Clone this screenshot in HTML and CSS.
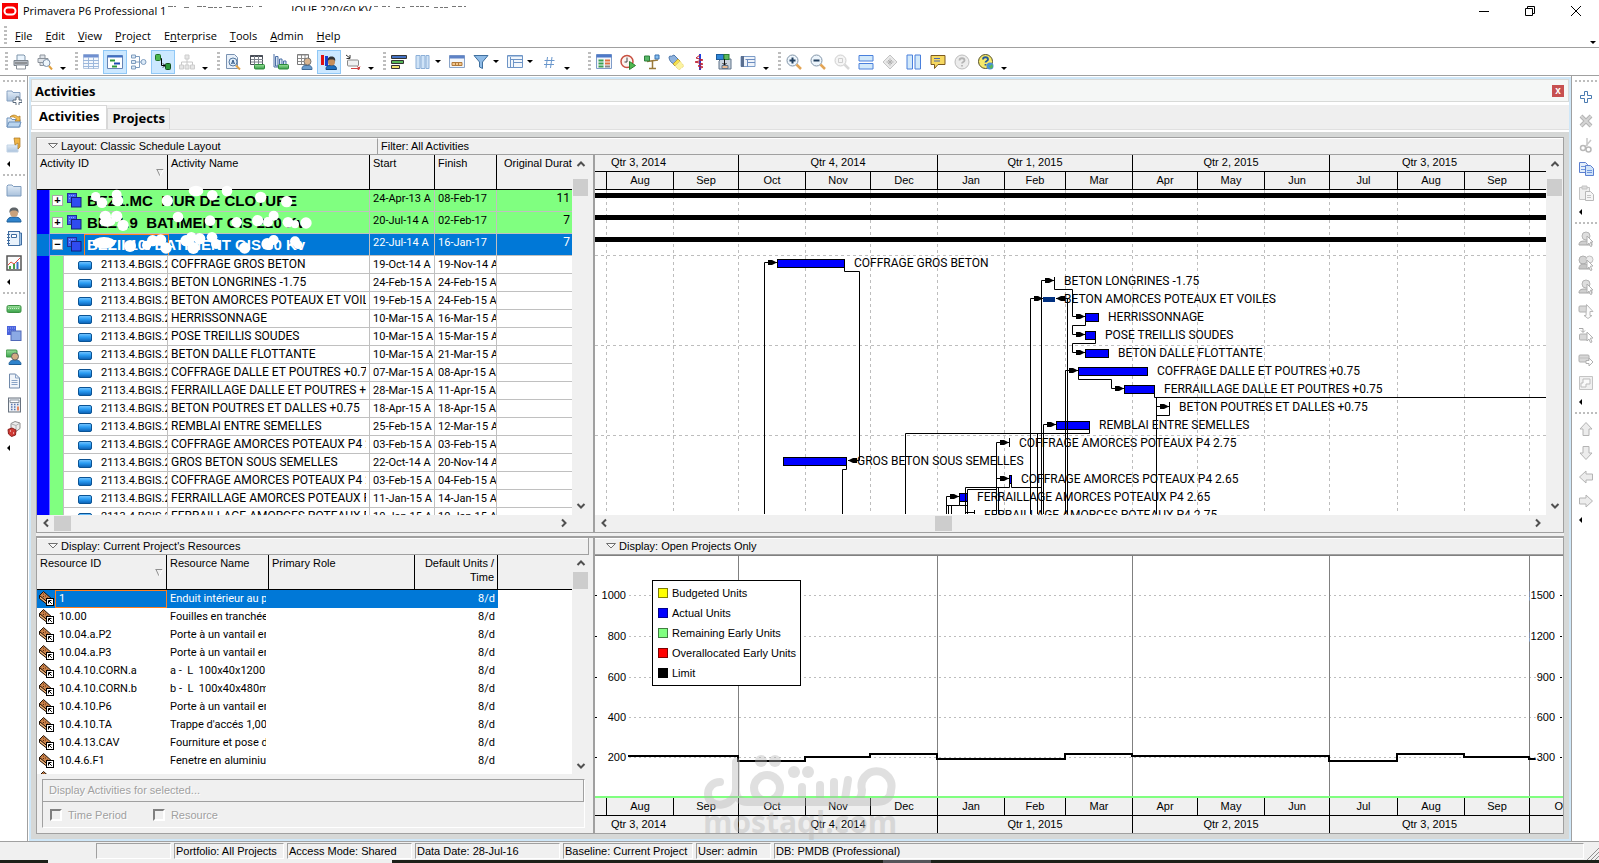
FILE: index.html
```html
<!DOCTYPE html>
<html lang="en">
<head>
<meta charset="utf-8">
<title>Primavera P6 Professional</title>
<link rel="stylesheet" href="styles.css">
</head>
<body>
<svg class="defs" aria-hidden="true">
  <defs>
    <linearGradient id="g-blue" x1="0" y1="0" x2="0" y2="1"><stop offset="0" stop-color="#7cc8ff"/><stop offset=".45" stop-color="#2a9df4"/><stop offset="1" stop-color="#0a5fb4"/></linearGradient>
    <linearGradient id="g-folder" x1="0" y1="0" x2="0" y2="1"><stop offset="0" stop-color="#e3edf7"/><stop offset="1" stop-color="#a9c1dc"/></linearGradient>
    <linearGradient id="g-green" x1="0" y1="0" x2="0" y2="1"><stop offset="0" stop-color="#9be09b"/><stop offset="1" stop-color="#38a048"/></linearGradient>
    <symbol id="i-act" viewBox="0 0 14 9"><rect x=".5" y=".5" width="13" height="8" rx="1.5" fill="url(#g-blue)" stroke="#0b5394"/></symbol>
    <symbol id="i-wbs" viewBox="0 0 15 15"><rect x=".5" y=".5" width="9" height="9" fill="#3f5ff0" stroke="#20309a"/><path d="M2 2.500h6M2 5.500h3" stroke="#8fa5ff" stroke-dasharray="1 1"/><rect x="4.500" y="4.500" width="9.500" height="9.500" fill="#2f4bf0" stroke="#15207a"/></symbol>
    <symbol id="i-res" viewBox="0 0 15 15"><path d="M.5 4.500 4.500.5 14 9l-4 5.500z" fill="#c8814a" stroke="#1c0f05"/><path d="M.5 4.500v3l9 7V12z" fill="#f3b377" stroke="#1c0f05"/><path d="M4 3h1M6 5h1M4 5.500h1M8 7h1M7 8.500h1" stroke="#5a2a0c"/><rect x="7.500" y="7.500" width="7" height="7" fill="#fff" stroke="#000"/><path d="M9.500 12.500V9.500h3M10 10l2.800 2.800" fill="none" stroke="#000"/></symbol>
    <symbol id="i-up" viewBox="0 0 10 8"><path d="m1.500 6 3.500-3.500L8.500 6" fill="none" stroke="#505050" stroke-width="2"/></symbol>
    <symbol id="i-down" viewBox="0 0 10 8"><path d="M1.500 2 5 5.500 8.500 2" fill="none" stroke="#505050" stroke-width="2"/></symbol>
    <symbol id="i-left" viewBox="0 0 8 10"><path d="M6 1.500 2.500 5 6 8.500" fill="none" stroke="#505050" stroke-width="2"/></symbol>
    <symbol id="i-right" viewBox="0 0 8 10"><path d="M2 1.500 5.500 5 2 8.500" fill="none" stroke="#505050" stroke-width="2"/></symbol>
    <symbol id="i-tri" viewBox="0 0 10 6"><path d="M.5.5h9L5 5z" fill="#f8f8f8" stroke="#707070"/></symbol>
    <symbol id="i-person" viewBox="0 0 16 16"><path d="M1 15c0-4 3-5 7-5s7 1 7 5z" fill="#2f83cc" stroke="#1b5c97"/><circle cx="8" cy="6" r="4" fill="#c9a27c"/><path d="M3.500 6C3 2 5 .5 8 .5S13 2 12.500 6c-1-2-2-2.500-4.500-2.500S4.500 4 3.500 6z" fill="#5e6468"/></symbol>
    <symbol id="i-personx" viewBox="0 0 16 16"><circle cx="8" cy="5" r="4" fill="#dedede" stroke="#b4b4b4"/><path d="M1 14c0-4 3-4 7-4s6 0 6 4z" fill="#cfcfcf" stroke="#a8a8a8"/><path d="m9 5 6 6-2.600.2L14 15l-1.500.6-1.500-3.500L9 14z" fill="#fff" stroke="#b0b0b0"/></symbol>
    <symbol id="i-boxx" viewBox="0 0 16 16"><rect x="1" y="4" width="10" height="7" rx="1" fill="#d8d8d8" stroke="#b0b0b0"/><path d="M1.500 7h9" stroke="#c0c0c0"/><path d="M8 9.500h3V7l4 4-4 4v-2.500H8z" fill="#fff" stroke="#b0b0b0"/></symbol>
    <symbol id="i-arrow" viewBox="0 0 16 16"><path d="M8 1.500 14 8h-3v6.500H5V8H2z" fill="#ececec" stroke="#b4b4b4"/></symbol>
  </defs>
</svg>

<header class="titlebar">
  <svg class="logo" viewBox="0 0 16 16"><rect width="16" height="16" fill="#f80000"/><rect x="2.500" y="4.500" width="11" height="7" rx="3.500" fill="none" stroke="#fff" stroke-width="2"/></svg>
  <span class="app-name">Primavera P6 Professional 1</span>
  <svg class="scraps" viewBox="0 0 120 8"><path d="M2 1.500h8M18 2.500h5M31 1.500h9M42 2.500h14M60 1.500h5M67 2.500h9M80 1.500h7M93 1.500h3" stroke="#777" stroke-dasharray="5 1 3 2"/></svg>
  <span class="clipped">IQUE 220/60 KV</span>
  <svg class="scraps" viewBox="0 0 120 8"><path d="M2 1.500h6M10 1.500h8M24 2.500h9M38 1.500h20M62 2.500h14M80 1.500h4M86 1.500h8" stroke="#777" stroke-dasharray="4 2 3 1"/></svg>
  <span class="spacer"></span>
  <button class="winbtn" aria-label="Minimize"><svg viewBox="0 0 10 10"><path d="M0 5.500h10" stroke="#000"/></svg></button>
  <button class="winbtn" aria-label="Restore"><svg viewBox="0 0 10 10"><path d="M.5 2.500h7v7h-7zM2.500 2.500v-2h7v7h-2" fill="none" stroke="#000"/></svg></button>
  <button class="winbtn" aria-label="Close"><svg viewBox="0 0 10 10"><path d="m0 0 10 10M10 0 0 10" stroke="#000"/></svg></button>
</header>

<nav class="menubar">
  <i class="grip tall"></i>
  <a href="#"><u>F</u>ile</a><a href="#"><u>E</u>dit</a><a href="#"><u>V</u>iew</a><a href="#"><u>P</u>roject</a><a href="#">E<u>n</u>terprise</a><a href="#"><u>T</u>ools</a><a href="#"><u>A</u>dmin</a><a href="#"><u>H</u>elp</a>
  <span class="spacer"></span>
  <button class="more" aria-label="Menu options"></button>
</nav>

<div class="toolbar">
  <div class="group"><i class="grip tall"></i>
    <button class="tool" aria-label="Print"><svg viewBox="0 0 16 16"><path d="M4 6V1h7l1 1v4" fill="#eaf4fd" stroke="#7f95ab"/><path d="M1 6.500h14v5H1z" fill="#b8bec6" stroke="#7d848c"/><path d="M2 9h12" stroke="#666"/><path d="M3.500 11h9v4h-9z" fill="#fff" stroke="#8a9199"/></svg></button>
    <button class="tool" aria-label="Print Preview"><svg viewBox="0 0 16 16"><path d="M3 4V1h5v3M1 4.500h10v4H1zM3 8.500h5v3H3z" fill="#dfe3e8" stroke="#8c939b"/><circle cx="9.500" cy="9" r="3.500" fill="#eef6fc" stroke="#7c8fa5"/><path d="m12 12 3 3.500" stroke="#e0a040" stroke-width="2"/></svg></button>
    <button class="more" aria-label="More"></button></div>
  <div class="group"><i class="grip tall"></i>
    <button class="tool" aria-label="Activity Table"><svg viewBox="0 0 16 16"><path d="M.5.5h15v14H.5z" fill="#f4f8fd" stroke="#b7c8e0"/><path d="M.5.5h15v3H.5z" fill="#6f8fd0"/><path d="M0 6.500h16M0 9.500h16M0 12.500h16M5.500 3v12M10.500 3v12" stroke="#9db8dc"/></svg></button>
    <button class="tool on" aria-label="Gantt Chart"><svg viewBox="0 0 16 16"><path d="M.5 1.500h15v13H.5z" fill="#fff" stroke="#6684b5"/><path d="M.5 1.500h15v2H.5z" fill="#3d6fc4"/><path d="M3 6.500h5" stroke="#2a9a3a" stroke-width="2"/><path d="M7 9.500h6" stroke="#1d49b0" stroke-width="2"/><path d="M5 12.500h5" stroke="#2a9a3a" stroke-width="2"/></svg></button>
    <button class="tool" aria-label="Activity Network"><svg viewBox="0 0 16 16"><path d="M4 2.500h4.500v11H4M4 8h6" fill="none" stroke="#7f9cbe"/><path d="M.5 1h4v3h-4zM.5 6.500h4v3h-4zM.5 12h4v3h-4z" fill="#dceaf7" stroke="#7f9cbe"/><circle cx="12.500" cy="8" r="2.500" fill="#dceaf7" stroke="#7f9cbe"/></svg></button>
    <button class="tool on" aria-label="Trace Logic"><svg viewBox="0 0 16 16"><path d="M5 4.500h1.500v7H10M8 9.500l2 2-2 2" fill="none" stroke="#000"/><rect x=".5" y=".5" width="5" height="6" rx="1" fill="#4cb84c" stroke="#20702a"/><rect x="10.500" y="9.500" width="5" height="6" rx="1" fill="#2c9a3c" stroke="#155020"/></svg></button>
    <button class="tool" aria-label="Chart View"><svg viewBox="0 0 16 16"><path d="M8 4v7M2.500 11V8h11v3" fill="none" stroke="#c8c8c8"/><path d="M6 1h4v4H6zM.5 11h4v4h-4zM6 11h4v4H6zM11.500 11h4v4h-4z" fill="#e6e6e6" stroke="#cdcdcd"/></svg></button>
    <button class="more" aria-label="More"></button></div>
  <div class="group"><i class="grip tall"></i>
    <button class="tool" aria-label="Activity Details"><svg viewBox="0 0 16 16"><path d="M1.500.5h8l3 3v11h-11z" fill="#e8f0f9" stroke="#7a92b2"/><circle cx="8" cy="8" r="4" fill="#dfeefb" stroke="#56789f"/><path d="m6.500 10 1.500-4 1.500 4M7 9h2" fill="none" stroke="#345a8a"/><path d="m11 11.500 4 4" stroke="#e3a243" stroke-width="2"/></svg></button>
    <button class="tool" aria-label="Resource Usage"><svg viewBox="0 0 16 16"><path d="M1.500 1.500h12v9h-12z" fill="#fff" stroke="#4a4f58"/><path d="M1.500 2h12" stroke="#4a4f58" stroke-width="2"/><path d="M2 5.500h12M2 8h12M5.500 2v9M9.500 2v9" stroke="#7c828c"/><rect x="5.500" y="10.500" width="10" height="4.500" rx="1" fill="url(#g-green)" stroke="#2b8a3a"/></svg></button>
    <button class="tool" aria-label="Resource Profile"><svg viewBox="0 0 16 16"><path d="M1 0v13h14" fill="none" stroke="#4a6ea5"/><path d="M2.500 2.500h2.500V12H2.500zM6.500 5h2.500v7H6.500zM10.500 7h2.500v5h-2.500z" fill="#d7e6f6" stroke="#4a6ea5"/><rect x="5.500" y="10.500" width="10" height="4.500" rx="1" fill="url(#g-green)" stroke="#2b8a3a"/></svg></button>
    <button class="tool" aria-label="Resource Spreadsheet"><svg viewBox="0 0 16 16"><path d="M.5.500h11v10H.5z" fill="#fff" stroke="#777"/><path d="M.5 1h11M1 4.500h10M1 7.500h10M4.500 1v9M8 1v9" stroke="#8b8b8b"/><path d="M5 15.500c0-4 2-4 5-4s5 0 5 4z" fill="#6b9ccc" stroke="#3c6998"/><circle cx="10.500" cy="7.500" r="3.500" fill="#d8b48f" stroke="#777"/></svg></button>
    <button class="tool on" aria-label="Resource Profile Chart"><svg viewBox="0 0 16 16"><path d="M1.500 1v10" stroke="#e01010" stroke-width="3"/><path d="M5.500 2v10" stroke="#1740d0" stroke-width="3"/><path d="M5 15.500c0-4 2-4 5-4s5.500 0 5.500 4z" fill="#1d6fc0" stroke="#0f4680"/><circle cx="10.500" cy="8" r="3.500" fill="#c58d5a"/><path d="M7 8c-1-4 1-5.500 3.500-5.500S15 4 14 8c0-2-1-2.500-3.500-2.500S7 6 7 8z" fill="#333"/></svg></button>
    <button class="tool" aria-label="Assign"><svg viewBox="0 0 16 16"><path d="m1 1 4 3M5 1v3.500H1.500" fill="none" stroke="#333"/><rect x="2.500" y="6" width="11" height="6" rx="1" fill="#f0f0f0" stroke="#888"/><path d="M6 14.500h8l1-2M12 12.500l3 2-3 2" fill="none" stroke="#d04040"/></svg></button>
    <button class="more" aria-label="More"></button></div>
  <div class="group"><i class="grip tall"></i>
    <button class="tool" aria-label="Bars"><svg viewBox="0 0 16 16"><path d="M.5 1.500h15v3H.5z" fill="#4472c4" stroke="#333"/><path d="M.5 6.500h12v3H.5z" fill="#58b858" stroke="#333"/><path d="M.5 11.500h8v3h-8z" fill="#f0e070" stroke="#333"/></svg></button>
    <button class="tool" aria-label="Columns"><svg viewBox="0 0 16 16"><path d="M1 1.500h4v13H1zM6 1.500h4v13H6zM11 1.500h3v13h-3z" fill="#cfe3f7" stroke="#8db0d8"/></svg></button><button class="drop" aria-label="Columns options"></button>
    <button class="tool" aria-label="Timescale"><svg viewBox="0 0 16 16"><path d="M.5 1.500h15v12H.5z" fill="#f2f6fb" stroke="#8aa4c8"/><path d="M.5 1.500h15v3H.5z" fill="#5e82c6"/><path d="M3 8.500h10v3H3z" fill="#f4c68a" stroke="#b07a3c"/><path d="M6.500 8v4M9.500 8v4" stroke="#b07a3c"/></svg></button>
    <button class="tool" aria-label="Filter"><svg viewBox="0 0 16 16"><path d="M1 1.500h14L9.500 8v6.500l-3-1.500V8z" fill="#8fbbe6" stroke="#40709f"/></svg></button><button class="drop" aria-label="Filter options"></button>
    <button class="tool" aria-label="Group and Sort"><svg viewBox="0 0 16 16"><path d="M.5 1.500h15v12H.5z" fill="#f2f7fc" stroke="#6d94c6"/><path d="M1 2h14M3.500 3v10M3 5.500h12M6.500 6v8M6 8.500h9" stroke="#6d94c6"/></svg></button><button class="drop" aria-label="Group options"></button>
    <button class="tool" aria-label="Number"><svg viewBox="0 0 16 16"><path d="M6.500 3 5 14M11 3 9.500 14M3.500 6.500h10M3 10.500h10" stroke="#6a97cc"/></svg></button>
    <button class="more" aria-label="More"></button></div>
  <div class="group wide"><i class="grip tall"></i>
    <button class="tool" aria-label="Activity Codes"><svg viewBox="0 0 16 16"><path d="M.5.5h15v14H.5z" fill="#f2f5fb" stroke="#7f9cc8"/><path d="M.5.5h15v3H.5z" fill="#4d78c8"/><path d="M2.500 6.500h5M2.500 9.500h5M2.500 12.500h5" stroke="#3aa050" stroke-width="2"/><path d="M9 6.500h5M9 9.500h5" stroke="#e07040" stroke-width="2"/><path d="M9 12.500h5" stroke="#888" stroke-width="2"/></svg></button>
    <button class="tool" aria-label="Schedule"><svg viewBox="0 0 16 16"><circle cx="7" cy="7.500" r="6" fill="#fbf3f0" stroke="#c85040" stroke-width="1.500"/><path d="M7 3.500v4.500H4.500" fill="none" stroke="#444"/><path d="m9.500 7.500 6 4-6 4z" fill="#4fb850" stroke="#2b8030"/></svg></button>
    <button class="tool" aria-label="Level Resources"><svg viewBox="0 0 16 16"><path d="M3 7.500 14 6M8.500 7v7M5 14.500h7" fill="none" stroke="#9a7a3a" stroke-width="1.500"/><path d="M.5 2h5v5h-5z" fill="#58b868" stroke="#2f7f3c"/><path d="M11 1h4v4h-4z" fill="#84bdf0" stroke="#3a72b0"/></svg></button>
    <button class="tool" aria-label="Progress Spotlight"><svg viewBox="0 0 16 16"><path d="M1 3c1-2 2 0 3-1l2-1 4 4-4 5C3 9 1 6 1 3z" fill="#8fb3de" stroke="#4f78ac"/><path d="m10 5 2 2-5 5-2-2z" fill="#f5e04a" stroke="#b8a040"/><path d="m12 7 4 5-5 4-4-4z" fill="#fbf3a0" stroke="#e6d070" stroke-dasharray="1 1"/></svg></button>
    <button class="tool" aria-label="Progress Line"><svg viewBox="0 0 16 16"><path d="M8 0v16" stroke="#2040e0" stroke-width="2"/><path d="m8 1-4 3 7 2-8 2 8 2-5 2 5 1-4 2" fill="none" stroke="#c02030"/></svg></button>
    <button class="tool" aria-label="Store Period Performance"><svg viewBox="0 0 16 16"><path d="M5 5h10v10H3V7z" fill="#c9d3de" stroke="#5f7389"/><rect x=".5" y=".5" width="7" height="5" fill="#2f86d8" stroke="#1b5a9a"/><rect x="8" y=".5" width="5" height="5" fill="#5cba5c" stroke="#2d7f33"/><path d="M8.500 5v6M6.500 9l2 2 2-2" fill="none" stroke="#111"/><path d="M6 11.500h6v3H6z" fill="#e8b890" stroke="#5f7389"/></svg></button>
    <button class="tool" aria-label="Claim Digger"><svg viewBox="0 0 16 16"><path d="M1 2.500h14v10H1z" fill="#eef3fa" stroke="#7c9cc8"/><path d="M2.500 2v11" stroke="#5a6f90" stroke-width="3"/><path d="M5.500 5.500H15M7.500 6v7M7.500 8.500H15" fill="none" stroke="#6d8dc0"/></svg></button>
    <button class="more" aria-label="More"></button></div>
  <div class="group"><i class="grip tall"></i>
    <button class="tool" aria-label="Zoom In"><svg viewBox="0 0 16 16"><circle cx="6.500" cy="6.500" r="5.500" fill="#edf5fc" stroke="#8295a8"/><path d="M6.500 3.500v6M3.500 6.500h6" stroke="#23405f" stroke-width="2"/><path d="m10.500 10.500 4.500 4.500" stroke="#e3a556" stroke-width="2.500"/></svg></button>
    <button class="tool" aria-label="Zoom Out"><svg viewBox="0 0 16 16"><circle cx="6.500" cy="6.500" r="5.500" fill="#edf5fc" stroke="#8295a8"/><path d="M3.500 6.500h6" stroke="#23405f" stroke-width="2"/><path d="m10.500 10.500 4.500 4.500" stroke="#e3a556" stroke-width="2.500"/></svg></button>
    <button class="tool" aria-label="Zoom to Fit"><svg viewBox="0 0 16 16"><circle cx="6.500" cy="6.500" r="5.500" fill="#f5f5f5" stroke="#cfcfcf"/><path d="M4.500 4.500h4v4h-4z" fill="none" stroke="#cfcfcf"/><path d="m10.500 10.500 4.500 4.500" stroke="#d8d8d8" stroke-width="2.500"/></svg></button>
    <button class="tool" aria-label="Tile Horizontally"><svg viewBox="0 0 16 16"><path d="M1 1.500h14v5.500H1zM1 9.500h14V15H1z" fill="#d2e9fa" stroke="#4a80dc"/></svg></button>
    <button class="tool" aria-label="Milestone"><svg viewBox="0 0 16 16"><path d="m8 1 7 7-7 7-7-7z" fill="#e8e8e8" stroke="#c4c4c4"/><path d="M8 4.500v7M4.500 8h7M6 6l4 4M10 6l-4 4" stroke="#b0b0b0"/></svg></button>
    <button class="tool" aria-label="Tile Vertically"><svg viewBox="0 0 16 16"><path d="M1 1h5.500v14H1zM9 1h5.500v14H9z" fill="#d2e9fa" stroke="#4a80dc"/></svg></button>
    <button class="tool" aria-label="Comment"><svg viewBox="0 0 16 16"><path d="M1 1.500h14v9H8L4.500 14.500V10.500H1z" fill="#f6d860" stroke="#7c5a20"/><path d="M4 4.500h6M4 7h6" stroke="#4a6ab0"/></svg></button>
    <button class="tool" aria-label="Help Topic"><svg viewBox="0 0 16 16"><circle cx="8" cy="8" r="7" fill="#ececec" stroke="#bdbdbd"/><path d="M5.500 6.500c0-3 5-3 5 0 0 1.500-2.500 1.500-2.500 3M8 11v1.500" fill="none" stroke="#b4b4b4" stroke-width="1.800"/></svg></button>
    <button class="tool" aria-label="Online Help"><svg viewBox="0 0 16 16"><circle cx="7.500" cy="7.500" r="7" fill="#f6e96a" stroke="#54502a"/><path d="M5 5.500c0-3 5-3 5 0 0 1.500-2.500 1.500-2.500 3M7.500 10v1.500" fill="none" stroke="#22579c" stroke-width="1.800"/><circle cx="12" cy="12" r="3.500" fill="#4a90d8"/><path d="m10 11 2 1 2-2 1 3-2 2z" fill="#57b857"/></svg></button>
    <button class="more" aria-label="More"></button></div>
</div>

<div class="workspace">
  <aside class="rail left">
    <i class="grip flat"></i>
    <button class="tool" aria-label="New Project"><svg viewBox="0 0 16 16"><path d="M1 3.500V2h5l1 1.500h7V12H1z" fill="url(#g-folder)" stroke="#86a0c0"/><path d="M10 8h3v3h3v2.500h-3v3h-3v-3H7V11h3z" fill="#fff" stroke="#5a6a7c"/></svg></button>
    <button class="tool" aria-label="Open Project"><svg viewBox="0 0 16 16"><path d="M1 14V5h4l1 1.500h8V14z" fill="url(#g-folder)" stroke="#6f93bd"/><path d="M1 14 3 9h12l-2 5z" fill="#b9d4ee" stroke="#6f93bd"/><path d="M4 4c3-3 6-2 8 0l2-1v5H9l1.500-2C9 4 7 3.500 4 4z" fill="#f5bf4f" stroke="#a87420" stroke-width=".7"/></svg></button>
    <button class="tool" aria-label="Close Project"><svg viewBox="0 0 16 16"><path d="M1 15V8h11v7z" fill="url(#g-folder)" stroke="#c3d4e6"/><path d="M8 1h6v9l-2 2V6L9 8z" fill="#f0b546" stroke="#a87420" stroke-width=".7"/></svg></button>
    <button class="more" aria-label="More"></button>
    <i class="grip flat"></i>
    <button class="tool" aria-label="Projects"><svg viewBox="0 0 16 16"><path d="M1 3.500V3l1-1h4l1.500 1.500H15V13H1z" fill="url(#g-folder)" stroke="#7f9cbe"/></svg></button>
    <button class="tool" aria-label="Resources"><svg><use href="#i-person"/></svg></button>
    <button class="tool" aria-label="Reports"><svg viewBox="0 0 16 16"><rect x="2.500" y=".5" width="11" height="14" fill="#e9f2fb" stroke="#3f6ca0"/><path d="M13.500 2h2v12h-2" fill="#9cc0e4" stroke="#3f6ca0"/><path d="M5.500 3.500h5v3h-5z" fill="#fff" stroke="#3f6ca0"/><path d="M1 3.500h3M1 6.500h3M1 9.500h3M1 12.500h3" stroke="#3f6ca0"/></svg></button>
    <button class="tool" aria-label="Tracking"><svg viewBox="0 0 16 16"><rect x="1" y="1" width="14" height="14" fill="#fafafa" stroke="#555" stroke-width="1.500"/><path d="m2 10 3-3 3 2 6-6" fill="none" stroke="#e05040"/><path d="M4 14v-3M8 14V9" stroke="#48a048" stroke-width="2"/><path d="M11.500 14V7" stroke="#3c70c8" stroke-width="2"/></svg></button>
    <button class="more" aria-label="More"></button>
    <i class="grip flat"></i>
    <button class="tool" aria-label="Activities"><svg viewBox="0 0 16 16"><rect x="1" y="4.500" width="14" height="7" rx="1.500" fill="url(#g-green)" stroke="#3c9044"/><path d="M2 7.500h12" stroke="#c8f0c8" stroke-dasharray="1 1"/></svg></button>
    <button class="tool" aria-label="WBS"><svg viewBox="0 0 16 16"><rect x="1" y="1" width="9" height="9" fill="#4a63dc"/><path d="M2 3h7M2 6h7" stroke="#90a4f8" stroke-dasharray="1 1"/><rect x="5" y="6" width="10" height="9.500" fill="#8ba9e4" stroke="#5068b8"/></svg></button>
    <button class="tool" aria-label="Assignments"><svg viewBox="0 0 16 16"><rect x="0" y="1" width="11" height="7" rx="1" fill="url(#g-green)" stroke="#3c9044"/><path d="M3 15.500c0-3 2-4.500 6-4.500s6 1.500 6 4.500z" fill="#2f83cc" stroke="#1b5c97"/><circle cx="9" cy="7.500" r="3.500" fill="#d4ab83" stroke="#666"/></svg></button>
    <button class="tool" aria-label="Work Products"><svg viewBox="0 0 16 16"><path d="M3.500 1h6l4 4v10h-10z" fill="#f1f5fa" stroke="#7089aa"/><path d="M9.500 1v4h4M5.500 7.500h6M5.500 9.500h6M5.500 11.500h6" fill="none" stroke="#8aa4c6"/></svg></button>
    <button class="tool" aria-label="Expenses"><svg viewBox="0 0 16 16"><rect x="2.500" y="1" width="12" height="14" fill="#eceff3" stroke="#68727f"/><path d="M4 3h9v2.500H4z" fill="#fff" stroke="#8b95a1"/><path d="M5 7.500h1.500M8 7.500h1.500M11 7.500h1.500M5 10h1.500M8 10h1.500M5 12.500h1.500M8 12.500h1.500" stroke="#5674b0" stroke-width="1.500"/><path d="M12 9.500v4" stroke="#e06030" stroke-width="1.500"/></svg></button>
    <button class="tool" aria-label="Risks"><svg viewBox="0 0 16 16"><path d="m5 2.500 4-2 5 1.500v5.500l-4 3-5-2z" fill="#ededed" stroke="#8c8c8c"/><path d="M5.500 3 10 4.500l4-2.500M10 4.500v5" fill="none" stroke="#b0b0b0"/><path d="m2 8.500 4-1.500 4 2-.5 5-4 1.500-3-2.500z" fill="#cf3a34" stroke="#8c1f1c"/><path d="M4 10h1M7 12h1" stroke="#fff"/></svg></button>
    <button class="more" aria-label="More"></button>
  </aside>

  <main class="window">
    <div class="window-head"><h1>Activities</h1><button class="close" aria-label="Close">x</button></div>
    <div class="tabs"><button class="tab active">Activities</button><button class="tab">Projects</button></div>
    <div class="desk">
      <section class="upper">
        <div class="optbar">
          <div class="opt first"><svg class="tri"><use href="#i-tri"/></svg>Layout: Classic Schedule Layout</div>
          <div class="opt">Filter: All Activities</div>
        </div>
        <div class="split">
          <div class="pane-left">
            <div class="scroller">
              <div class="grid">
                <table class="acts">
                  <colgroup><col class="w13"><col class="w14"><col class="w-id"><col class="w-name"><col class="w-start"><col class="w-finish"><col></colgroup>
                  <thead><tr><th colspan="3">Activity ID<svg class="sort" viewBox="0 0 8 8"><path d="M.5.500h7M1 .5 4 7" fill="none" stroke="#909090"/><path d="M7.500.5 4 7" stroke="#fff"/></svg></th><th>Activity Name</th><th>Start</th><th>Finish</th><th class="od">Original Duration</th></tr></thead>
                  <tbody>
                    <tr class="grp"><td class="c0"></td><td colspan="3" class="gname"><div><b class="pm">+</b><svg class="wbs"><use href="#i-wbs"/></svg><strong>BEZ1.MC  MUR DE CLOTURE</strong></div></td><td class="dt"><span>24-Apr-13 A</span></td><td class="dt"><span>08-Feb-17</span></td><td class="num">11</td></tr>
                    <tr class="grp"><td class="c0"></td><td colspan="3" class="gname"><div><b class="pm">+</b><svg class="wbs"><use href="#i-wbs"/></svg><strong>BEZ1.9  BATIMENT GIS 220 Kv</strong></div></td><td class="dt"><span>20-Jul-14 A</span></td><td class="dt"><span>02-Feb-17</span></td><td class="num">7</td></tr>
                    <tr class="grp sel"><td class="c0"></td><td colspan="3" class="gname"><div><b class="pm">−</b><svg class="wbs"><use href="#i-wbs"/></svg><strong class="focus">BEZII.10. BATIMENT GIS 60 Kv</strong></div></td><td class="dt"><span>22-Jul-14 A</span></td><td class="dt"><span>16-Jan-17</span></td><td class="num">7</td></tr>
                    <tr><td class="c0"></td><td class="c1"></td><td class="id"><svg><use href="#i-act"/></svg><span>2113.4.BGIS.20</span></td><td><span>COFFRAGE GROS BETON</span></td><td class="dt"><span>19-Oct-14 A</span></td><td class="dt"><span>19-Nov-14 A</span></td><td></td></tr>
                    <tr><td class="c0"></td><td class="c1"></td><td class="id"><svg><use href="#i-act"/></svg><span>2113.4.BGIS.20</span></td><td><span>BETON LONGRINES -1.75</span></td><td class="dt"><span>24-Feb-15 A</span></td><td class="dt"><span>24-Feb-15 A</span></td><td></td></tr>
                    <tr><td class="c0"></td><td class="c1"></td><td class="id"><svg><use href="#i-act"/></svg><span>2113.4.BGIS.20</span></td><td><span>BETON AMORCES POTEAUX ET VOILES</span></td><td class="dt"><span>19-Feb-15 A</span></td><td class="dt"><span>24-Feb-15 A</span></td><td></td></tr>
                    <tr><td class="c0"></td><td class="c1"></td><td class="id"><svg><use href="#i-act"/></svg><span>2113.4.BGIS.20</span></td><td><span>HERRISSONNAGE</span></td><td class="dt"><span>10-Mar-15 A</span></td><td class="dt"><span>16-Mar-15 A</span></td><td></td></tr>
                    <tr><td class="c0"></td><td class="c1"></td><td class="id"><svg><use href="#i-act"/></svg><span>2113.4.BGIS.20</span></td><td><span>POSE TREILLIS SOUDES</span></td><td class="dt"><span>10-Mar-15 A</span></td><td class="dt"><span>15-Mar-15 A</span></td><td></td></tr>
                    <tr><td class="c0"></td><td class="c1"></td><td class="id"><svg><use href="#i-act"/></svg><span>2113.4.BGIS.20</span></td><td><span>BETON DALLE FLOTTANTE</span></td><td class="dt"><span>10-Mar-15 A</span></td><td class="dt"><span>21-Mar-15 A</span></td><td></td></tr>
                    <tr><td class="c0"></td><td class="c1"></td><td class="id"><svg><use href="#i-act"/></svg><span>2113.4.BGIS.20</span></td><td><span>COFFRAGE DALLE ET POUTRES +0.75</span></td><td class="dt"><span>07-Mar-15 A</span></td><td class="dt"><span>08-Apr-15 A</span></td><td></td></tr>
                    <tr><td class="c0"></td><td class="c1"></td><td class="id"><svg><use href="#i-act"/></svg><span>2113.4.BGIS.20</span></td><td><span>FERRAILLAGE DALLE ET POUTRES +0.75</span></td><td class="dt"><span>28-Mar-15 A</span></td><td class="dt"><span>11-Apr-15 A</span></td><td></td></tr>
                    <tr><td class="c0"></td><td class="c1"></td><td class="id"><svg><use href="#i-act"/></svg><span>2113.4.BGIS.20</span></td><td><span>BETON POUTRES ET DALLES +0.75</span></td><td class="dt"><span>18-Apr-15 A</span></td><td class="dt"><span>18-Apr-15 A</span></td><td></td></tr>
                    <tr><td class="c0"></td><td class="c1"></td><td class="id"><svg><use href="#i-act"/></svg><span>2113.4.BGIS.20</span></td><td><span>REMBLAI ENTRE SEMELLES</span></td><td class="dt"><span>25-Feb-15 A</span></td><td class="dt"><span>12-Mar-15 A</span></td><td></td></tr>
                    <tr><td class="c0"></td><td class="c1"></td><td class="id"><svg><use href="#i-act"/></svg><span>2113.4.BGIS.20</span></td><td><span>COFFRAGE AMORCES POTEAUX P4 2.75</span></td><td class="dt"><span>03-Feb-15 A</span></td><td class="dt"><span>03-Feb-15 A</span></td><td></td></tr>
                    <tr><td class="c0"></td><td class="c1"></td><td class="id"><svg><use href="#i-act"/></svg><span>2113.4.BGIS.20</span></td><td><span>GROS BETON SOUS SEMELLES</span></td><td class="dt"><span>22-Oct-14 A</span></td><td class="dt"><span>20-Nov-14 A</span></td><td></td></tr>
                    <tr><td class="c0"></td><td class="c1"></td><td class="id"><svg><use href="#i-act"/></svg><span>2113.4.BGIS.20</span></td><td><span>COFFRAGE AMORCES POTEAUX P4 2.65</span></td><td class="dt"><span>03-Feb-15 A</span></td><td class="dt"><span>04-Feb-15 A</span></td><td></td></tr>
                    <tr><td class="c0"></td><td class="c1"></td><td class="id"><svg><use href="#i-act"/></svg><span>2113.4.BGIS.20</span></td><td><span>FERRAILLAGE AMORCES POTEAUX P4 2.65</span></td><td class="dt"><span>11-Jan-15 A</span></td><td class="dt"><span>14-Jan-15 A</span></td><td></td></tr>
                    <tr><td class="c0"></td><td class="c1"></td><td class="id"><svg><use href="#i-act"/></svg><span>2113.4.BGIS.20</span></td><td><span>FERRAILLAGE AMORCES POTEAUX P4 2.75</span></td><td class="dt"><span>10-Jan-15 A</span></td><td class="dt"><span>10-Jan-15 A</span></td><td></td></tr>
                  </tbody>
                </table>
                <svg class="marks" viewBox="0 0 960 330" fill="#fff"><g>
                  <circle cx="197" cy="50" r="14"/><circle cx="216" cy="68" r="16"/><circle cx="260" cy="44" r="15"/><circle cx="263" cy="62" r="17"/><circle cx="412" cy="62" r="17"/><ellipse cx="498" cy="33" rx="22" ry="16"/><circle cx="547" cy="46" r="16"/><circle cx="591" cy="33" r="16"/><circle cx="692" cy="52" r="17"/><circle cx="770" cy="65" r="17"/>
                  <circle cx="226" cy="109" r="17"/><circle cx="260" cy="109" r="17"/><ellipse cx="232" cy="126" rx="24" ry="14"/><circle cx="279" cy="136" r="17"/><circle cx="444" cy="111" r="16"/><circle cx="540" cy="122" r="16"/><circle cx="620" cy="127" r="16"/><circle cx="683" cy="122" r="17"/><circle cx="731" cy="107" r="15"/><circle cx="714" cy="126" r="15"/><circle cx="774" cy="127" r="16"/><circle cx="795" cy="133" r="12"/><circle cx="828" cy="129" r="17"/>
                  <ellipse cx="222" cy="188" rx="34" ry="17"/><circle cx="300" cy="198" r="18"/><circle cx="368" cy="182" r="17"/><circle cx="392" cy="180" r="17"/><circle cx="408" cy="204" r="17"/><circle cx="350" cy="196" r="14"/><circle cx="468" cy="182" r="17"/><circle cx="484" cy="172" r="16"/><circle cx="509" cy="176" r="17"/><circle cx="490" cy="204" r="18"/><circle cx="546" cy="172" r="16"/><circle cx="558" cy="192" r="15"/><circle cx="644" cy="204" r="17"/><circle cx="712" cy="192" r="18"/><circle cx="731" cy="180" r="15"/><circle cx="795" cy="184" r="15"/><circle cx="804" cy="194" r="13"/>
                </g></svg>
              </div>
              <div class="vbar"><button aria-label="Scroll up"><svg class="chev"><use href="#i-up"/></svg></button><i class="thumb"></i><span class="spacer"></span><button aria-label="Scroll down"><svg class="chev"><use href="#i-down"/></svg></button></div>
            </div>
            <div class="hbar"><button aria-label="Scroll left"><svg class="chev h"><use href="#i-left"/></svg></button><i class="thumb"></i><span class="spacer"></span><button aria-label="Scroll right"><svg class="chev h"><use href="#i-right"/></svg></button></div>
          </div>
          <div class="pane-right">
            <div class="scroller">
              <div class="gantt">
                <div class="scale">
                  <div class="quarters"><div class="cut">Qtr 3, 2014</div><div>Qtr 4, 2014</div><div>Qtr 1, 2015</div><div>Qtr 2, 2015</div><div>Qtr 3, 2015</div><div></div></div>
                  <div class="months"><div></div><div>Aug</div><div>Sep</div><div>Oct</div><div>Nov</div><div>Dec</div><div>Jan</div><div>Feb</div><div>Mar</div><div>Apr</div><div>May</div><div>Jun</div><div>Jul</div><div>Aug</div><div>Sep</div><div></div></div>
                </div>
                <svg class="canvas"><g transform="translate(-595 -190)">
                  <g stroke="#bdbdbd" stroke-dasharray="3 3"><path d="M606.500 190v324M673.500 190v324M738.500 190v324M805.500 190v324M870.500 190v324M937.500 190v324M1004.500 190v324M1065.500 190v324M1132.500 190v324M1197.500 190v324M1264.500 190v324M1329.500 190v324M1397.500 190v324M1464.500 190v324M1529.500 190v324M595 255.500h1500M595 345.500h1500M595 435.500h1500"/></g>
                  <path d="M595 195.500h1500M595 217.500h1500M595 239.500h1500" stroke="#000" stroke-width="5"/>
                  <g fill="#00f" stroke="#000">
                    <rect x="777.500" y="259.500" width="67" height="8"/><rect x="1085.500" y="313.500" width="13" height="8"/><rect x="1085.500" y="331.500" width="10" height="8"/><rect x="1085.500" y="349.500" width="23" height="8"/><rect x="1078.500" y="367.500" width="69" height="8"/><rect x="1124.500" y="385.500" width="30" height="8"/><rect x="1056.500" y="421.500" width="33" height="8"/><rect x="783.500" y="457.500" width="63" height="8"/><rect x="1009.500" y="475.500" width="2" height="8"/><rect x="959.500" y="493.500" width="8" height="8"/>
                  </g>
                  <rect x="1043" y="297" width="12" height="5" fill="#003080"/>
                  <g fill="none" stroke="#000"><path d="M764.500 514V262.500H777M844.500 268v3.500h15v189H848"/>
                    <path d="M1041.500 514V280.500H1054M1054.500 277v12.500h18v27H1085"/>
                    <path d="M1030.500 514V298.500H1043M1067.500 514V298.500H1056"/>
                    <path d="M1085.500 322v3.500h-13v9H1085M1095.500 340v3.500h-23v9H1085"/>
                    <path d="M1065.500 514V370.500H1078M1078.500 376v3.500h33v9H1124"/>
                    <path d="M1154.500 394v3.500H2095M1156.500 397v117M1156.500 406.500h13M1169.500 402v13.500h-13"/>
                    <path d="M1043.500 514V424.500H1056M1089.500 430v3.500H905.500V514M1037.500 433v81"/>
                    <path d="M996.500 514V442.500H1009M1009.500 438v9M846.500 466v3.500h-4V514"/>
                    <path d="M996.500 478.500H1009M1009.500 484v3.500h-44V514M1011.500 484v3.500H1041"/>
                    <path d="M946.500 514V496.500H959M967.500 514V489.500H996M998.500 487v27"/>
                    <path d="M959.500 502v3.500h-13M948.500 505v9M951.500 505v9M967.500 502v3.500h-8M966 512.500h9M974.500 510v4"/>
                  </g>
                  <path d="M768 260h4l5 2.500-5 2.500h-4zM1045 278h4l5 2.500-5 2.500h-4zM1034 296h4l5 2.500-5 2.500h-4zM1076 314h4l5 2.500-5 2.500h-4zM1076 332h4l5 2.500-5 2.500h-4zM1076 350h4l5 2.500-5 2.500h-4zM1069 368h4l5 2.500-5 2.500h-4zM1115 386h4l5 2.500-5 2.500h-4zM1160 404h4l5 2.500-5 2.500h-4zM1047 422h4l5 2.500-5 2.500h-4zM1000 440h4l5 2.500-5 2.500h-4zM1000 476h4l5 2.500-5 2.500h-4zM950 494h4l5 2.500-5 2.500h-4zM857 458h-4l-5 2.500 5 2.500h4zM1065 296h-4l-5 2.500 5 2.500h4z"/>
                  <g class="bar-label">
                    <text x="854" y="267">COFFRAGE GROS BETON</text><text x="1064" y="285">BETON LONGRINES -1.75</text><text x="1064" y="303">BETON AMORCES POTEAUX ET VOILES</text><text x="1108" y="321">HERRISSONNAGE</text><text x="1105" y="339">POSE TREILLIS SOUDES</text><text x="1118" y="357">BETON DALLE FLOTTANTE</text><text x="1157" y="375">COFFRAGE DALLE ET POUTRES +0.75</text><text x="1164" y="393">FERRAILLAGE DALLE ET POUTRES +0.75</text><text x="1179" y="411">BETON POUTRES ET DALLES +0.75</text><text x="1099" y="429">REMBLAI ENTRE SEMELLES</text><text x="1019" y="447">COFFRAGE AMORCES POTEAUX P4 2.75</text><text x="857" y="465">GROS BETON SOUS SEMELLES</text><text x="1021" y="483">COFFRAGE AMORCES POTEAUX P4 2.65</text><text x="977" y="501">FERRAILLAGE AMORCES POTEAUX P4 2.65</text><text x="984" y="519">FERRAILLAGE AMORCES POTEAUX P4 2.75</text>
                  </g>
                </g></svg>
              </div>
              <div class="vbar"><button aria-label="Scroll up"><svg class="chev"><use href="#i-up"/></svg></button><i class="thumb"></i><span class="spacer"></span><button aria-label="Scroll down"><svg class="chev"><use href="#i-down"/></svg></button></div>
            </div>
            <div class="hbar mid"><button aria-label="Scroll left"><svg class="chev h"><use href="#i-left"/></svg></button><i class="thumb"></i><span class="spacer"></span><button aria-label="Scroll right"><svg class="chev h"><use href="#i-right"/></svg></button></div>
          </div>
        </div>
      </section>

      <section class="lower">
        <div class="pane-left">
          <div class="optbar"><div class="opt"><svg class="tri"><use href="#i-tri"/></svg>Display: Current Project's Resources</div></div>
          <div class="scroller">
            <div class="grid">
              <table class="res">
                <colgroup><col class="w18"><col class="w-rid"><col class="w-rname"><col class="w-role"><col class="w-units"><col></colgroup>
                <thead><tr><th colspan="2">Resource ID<svg class="sort" viewBox="0 0 8 8"><path d="M.5.500h7M1 .5 4 7" fill="none" stroke="#909090"/><path d="M7.500.5 4 7" stroke="#fff"/></svg></th><th>Resource Name</th><th>Primary Role</th><th class="units">Default Units /<br>Time</th><th></th></tr></thead>
                <tbody>
                  <tr class="sel"><td class="ic"><svg><use href="#i-res"/></svg></td><td class="rid">1</td><td><span>Enduit intérieur au p</span></td><td></td><td class="num">8/d</td><td></td></tr>
                  <tr><td class="ic"><svg><use href="#i-res"/></svg></td><td class="rid">10.00</td><td><span>Fouilles en tranchée</span></td><td></td><td class="num">8/d</td><td></td></tr>
                  <tr><td class="ic"><svg><use href="#i-res"/></svg></td><td class="rid">10.04.a.P2</td><td><span>Porte à un vantail en</span></td><td></td><td class="num">8/d</td><td></td></tr>
                  <tr><td class="ic"><svg><use href="#i-res"/></svg></td><td class="rid">10.04.a.P3</td><td><span>Porte à un vantail en</span></td><td></td><td class="num">8/d</td><td></td></tr>
                  <tr><td class="ic"><svg><use href="#i-res"/></svg></td><td class="rid">10.4.10.CORN.a</td><td><span>a -  L  100x40x1200</span></td><td></td><td class="num">8/d</td><td></td></tr>
                  <tr><td class="ic"><svg><use href="#i-res"/></svg></td><td class="rid">10.4.10.CORN.b</td><td><span>b -  L  100x40x480m</span></td><td></td><td class="num">8/d</td><td></td></tr>
                  <tr><td class="ic"><svg><use href="#i-res"/></svg></td><td class="rid">10.4.10.P6</td><td><span>Porte à un vantail en</span></td><td></td><td class="num">8/d</td><td></td></tr>
                  <tr><td class="ic"><svg><use href="#i-res"/></svg></td><td class="rid">10.4.10.TA</td><td><span>Trappe d'accés 1,00</span></td><td></td><td class="num">8/d</td><td></td></tr>
                  <tr><td class="ic"><svg><use href="#i-res"/></svg></td><td class="rid">10.4.13.CAV</td><td><span>Fourniture et pose d</span></td><td></td><td class="num">8/d</td><td></td></tr>
                  <tr><td class="ic"><svg><use href="#i-res"/></svg></td><td class="rid">10.4.6.F1</td><td><span>Fenetre en aluminium</span></td><td></td><td class="num">8/d</td><td></td></tr>
                  <tr><td class="ic"><svg><use href="#i-res"/></svg></td><td class="rid">10.4.7.F2</td><td><span>Fenetre en aluminium</span></td><td></td><td class="num">8/d</td><td></td></tr>
                </tbody>
              </table>
            </div>
            <div class="vbar"><button aria-label="Scroll up"><svg class="chev"><use href="#i-up"/></svg></button><i class="thumb"></i><span class="spacer"></span><button aria-label="Scroll down"><svg class="chev"><use href="#i-down"/></svg></button></div>
          </div>
          <fieldset class="display" disabled>
            <div class="display-title">Display Activities for selected...</div>
            <div class="checks"><label><input type="checkbox">Time Period</label><label><input type="checkbox">Resource</label></div>
          </fieldset>
        </div>
        <div class="pane-right">
          <div class="optbar"><div class="opt"><svg class="tri"><use href="#i-tri"/></svg>Display: Open Projects Only</div></div>
          <div class="histogram">
            <div class="plot">
              <svg class="canvas"><g transform="translate(-595 -556)">
                <path d="M629 595.500h919M629 636.500h919M629 677.500h919M629 717.500h919M629 757.500h919" stroke="#bdbdbd" stroke-dasharray="2 3"/>
                <path d="M738.500 556v243M937.500 556v243M1132.500 556v243M1329.500 556v243M1529.500 556v243" stroke="#808080"/>
                <path d="M628 756h110v5h67v-4h65v-3h67v5h128v-5h67v2h197v5h68v-7h67v3h65v2h8" fill="none" stroke="#000" stroke-width="2"/>
                <path d="M595 595.500h2M595 636.500h2M595 677.500h2M595 717.500h2M595 757.500h2M1560 595.500h2M1560 636.500h2M1560 677.500h2M1560 717.500h2M1560 757.500h2" stroke="#000"/>
                <g class="axis"><text x="626" y="599">1000</text><text x="626" y="640">800</text><text x="626" y="681">600</text><text x="626" y="721">400</text><text x="626" y="761">200</text></g>
                <g class="axis"><text x="1555" y="599">1500</text><text x="1555" y="640">1200</text><text x="1555" y="681">900</text><text x="1555" y="721">600</text><text x="1555" y="761">300</text></g>
              </g></svg>
              <ul class="legend"><li><i class="sw y"></i>Budgeted Units</li><li><i class="sw b"></i>Actual Units</li><li><i class="sw g"></i>Remaining Early Units</li><li><i class="sw r"></i>Overallocated Early Units</li><li><i class="sw k"></i>Limit</li></ul>
            </div>
            <div class="scale bottom">
              <div class="months"><div></div><div>Aug</div><div>Sep</div><div>Oct</div><div>Nov</div><div>Dec</div><div>Jan</div><div>Feb</div><div>Mar</div><div>Apr</div><div>May</div><div>Jun</div><div>Jul</div><div>Aug</div><div>Sep</div><div>Oct</div></div>
              <div class="quarters"><div class="cut">Qtr 3, 2014</div><div>Qtr 4, 2014</div><div>Qtr 1, 2015</div><div>Qtr 2, 2015</div><div>Qtr 3, 2015</div><div></div></div>
            </div>
            <svg class="watermark" viewBox="0 0 194 90">
              <g fill="none" stroke="#b4b4b4" stroke-width="8" stroke-linecap="round" stroke-linejoin="round">
                <path d="M33 7v26c0 20-28 22-28 6 0-8 6-12 12-12M33 36c0 7 5 11 11 11h130c10 0 14-6 14-12a15 15 0 1 0-29 0c0 7-4 12-10 12"/>
                <circle cx="64" cy="33" r="13"/><path d="M99 32v12M117 30v14M131 27v16M145 25l-3 19"/>
              </g>
              <g fill="#b4b4b4"><circle cx="58" cy="6" r="6"/><circle cx="72" cy="6" r="6"/><circle cx="91" cy="17" r="6"/><circle cx="105" cy="17" r="6"/></g>
              <text x="0" y="78">mostaql.com</text>
            </svg>
          </div>
        </div>
      </section>
    </div>
  </main>

  <aside class="rail right">
    <i class="grip flat"></i>
    <button class="tool" aria-label="Add"><svg viewBox="0 0 16 16"><path d="M6.500 2.500h3v4h4v3h-4v4h-3v-4h-4v-3h4z" fill="#fff" stroke="#4a7ab0"/></svg></button>
    <button class="tool" aria-label="Delete"><svg viewBox="0 0 16 16"><path d="m3 3 10 10M13 3 3 13" stroke="#b4b4b4" stroke-width="4"/><path d="m3 3 10 10M13 3 3 13" stroke="#d4d4d4" stroke-width="2"/></svg></button>
    <button class="tool" aria-label="Cut"><svg viewBox="0 0 16 16"><path d="M9 1v8M13 3 7 10" stroke="#c8c8c8" stroke-width="1.500"/><circle cx="5" cy="11" r="2.500" fill="none" stroke="#b8b8b8" stroke-width="1.500"/><circle cx="10.500" cy="12.500" r="2.500" fill="none" stroke="#b8b8b8" stroke-width="1.500"/></svg></button>
    <button class="tool" aria-label="Copy"><svg viewBox="0 0 16 16"><path d="M1.500 1.500h6l2 2v8h-8z" fill="#e4effb" stroke="#5b7fd0"/><path d="M7.500 4.500h5l3 3v7h-8z" fill="#cfe3f8" stroke="#5b7fd0"/><path d="M3 5.500h4M3 8.500h4M9 9.500h5M9 11.500h5" stroke="#6f95dc"/></svg></button>
    <button class="tool" aria-label="Paste"><svg viewBox="0 0 16 16"><path d="M1.500 2.500h10v12h-10z" fill="#efefef" stroke="#c4c4c4"/><path d="M4 1h5v3H4z" fill="#ddd" stroke="#c4c4c4"/><path d="M7.500 6.500h5l3 3v6h-8z" fill="#f6f6f6" stroke="#b8b8b8"/><path d="M9 10.500h4M9 12.500h4" stroke="#c4c4c4"/></svg></button>
    <button class="more" aria-label="More"></button>
    <i class="grip flat"></i>
    <button class="tool" aria-label="Assign Resource"><svg><use href="#i-personx"/></svg></button>
    <button class="tool" aria-label="Assign Roles"><svg viewBox="0 0 16 16"><circle cx="5" cy="5" r="4" fill="#d4d4d4" stroke="#b0b0b0"/><circle cx="11.500" cy="4.500" r="3.500" fill="#ececec" stroke="#c0c0c0"/><path d="M1 14c0-4 2-5 5-5s6 1 6 5z" fill="#c6c6c6" stroke="#a8a8a8"/><path d="m9 5 6 6-2.600.2L14 15l-1.500.6-1.500-3.500L9 14z" fill="#fff" stroke="#b0b0b0"/></svg></button>
    <button class="tool" aria-label="Assign Resource by Role"><svg><use href="#i-personx"/></svg></button>
    <button class="tool" aria-label="Assign Activity Codes"><svg viewBox="0 0 16 16"><rect x="1" y="3" width="9" height="6" rx="1" fill="#d8d8d8" stroke="#b0b0b0"/><path d="M8.500 1.500 15 8.500h-3v4h2l-4 3-4-3h2z" fill="#fafafa" stroke="#b8b8b8"/></svg></button>
    <button class="tool" aria-label="Assign Predecessors"><svg viewBox="0 0 16 16"><path d="M1 1.500h4V5M3 3.500l2 2 2-2" fill="none" stroke="#a8a8a8"/><rect x="1.500" y="7" width="9" height="6" rx="1" fill="#d8d8d8" stroke="#b0b0b0"/><path d="m9 5 6 6-2.600.2L14 15l-1.500.6-1.500-3.500L9 14z" fill="#fff" stroke="#b0b0b0"/></svg></button>
    <button class="tool" aria-label="Assign Successors"><svg><use href="#i-boxx"/></svg></button>
    <button class="tool" aria-label="Assign Steps"><svg viewBox="0 0 16 16"><path d="M1.500 1.500h13v13h-13z" fill="#f0f0f0" stroke="#c4c4c4"/><path d="M5 4h7v5H8v3H3V8h2z" fill="#fafafa" stroke="#bdbdbd"/></svg></button>
    <button class="more" aria-label="More"></button>
    <i class="grip flat"></i>
    <button class="tool" aria-label="Move Up"><svg><use href="#i-arrow"/></svg></button>
    <button class="tool" aria-label="Move Down"><svg class="r180"><use href="#i-arrow"/></svg></button>
    <button class="tool" aria-label="Move Left"><svg class="r270"><use href="#i-arrow"/></svg></button>
    <button class="tool" aria-label="Move Right"><svg class="r90"><use href="#i-arrow"/></svg></button>
    <button class="more" aria-label="More"></button>
  </aside>
</div>

<footer class="statusbar">
  <span class="cell s0"></span><span class="cell s1">Portfolio: All Projects</span><span class="cell s2">Access Mode: Shared</span><span class="cell s3">Data Date: 28-Jul-16</span><span class="cell s4">Baseline: Current Project</span><span class="cell s5">User: admin</span><span class="cell s6">DB: PMDB (Professional)</span>
  <svg class="sizer" viewBox="0 0 12 12"><path d="M0 12 12 0M4 12l8-8M8 12l4-4" stroke="#909090"/></svg>
</footer>
<div class="taskbar"><i class="task"></i><i class="task dim"></i></div>
</body>
</html>
```
FILE: styles.css
```css
* { box-sizing: border-box; }
html, body { margin: 0; height: 100%; }
body {
  display: flex; flex-direction: column; overflow: hidden;
  background: #fff; color: #000;
  font: 11px/16px "Liberation Sans", Arial, sans-serif;
}
button { font: inherit; color: inherit; border: 0; padding: 0; margin: 0; background: none; }
svg { display: block; flex: none; }
.defs { position: absolute; width: 0; height: 0; }
.spacer { flex: 1; }

/* title bar */
.titlebar { display: flex; align-items: flex-start; height: 24px; flex: none; padding: 3px 0 0 2px; font: 11px/16px "Open Sans", "Noto Sans", sans-serif; }
.logo { width: 16px; height: 16px; margin-right: 5px; }
.app-name { white-space: nowrap; }
.scraps { width: 120px; height: 8px; margin-top: 2px; }
.clipped { height: 8px; overflow: hidden; margin-left: 5px; line-height: 14px; white-space: nowrap; }
.winbtn { width: 46px; height: 16px; display: grid; place-items: center; }
.winbtn svg { width: 10px; height: 10px; }

/* menus and toolbars */
.menubar { display: flex; align-items: center; height: 24px; flex: none; padding-left: 4px; border-bottom: 1px solid #a0a0a0; font: 11px/16px "Open Sans", "Noto Sans", sans-serif; }
.menubar a { color: #000; text-decoration: none; margin-right: 13px; }
.menubar .grip { margin: 0 8px 0 0; }
.grip.tall { width: 3px; height: 20px; flex: none; background: repeating-linear-gradient(#bdbdbd 0 2px, transparent 2px 4px); }
.grip.flat { width: 22px; height: 2px; flex: none; margin: 6px 0 3px; background: repeating-linear-gradient(90deg, #bdbdbd 0 2px, transparent 2px 4px); }
.toolbar { display: flex; height: 28px; flex: none; padding-left: 5px; border-bottom: 1px solid #a0a0a0; }
.group { display: flex; align-items: center; margin-right: 6px; }
.group.wide { margin-left: 9px; }
.group > .grip { margin-right: 1px; }
.tool { width: 24px; height: 24px; display: grid; place-items: center; flex: none; }
.tool svg { width: 16px; height: 16px; }
.tool.on { background: #cce8ff; border: 1px solid #90c8f6; }
.more { width: 12px; height: 24px; position: relative; flex: none; }
.more::after { content: ""; display: block; margin: 14px auto 0; width: 0; border: 3px solid transparent; border-top-color: #000; border-bottom: 0; }
.drop { width: 14px; height: 24px; margin-left: -4px; }
.drop::after { content: ""; display: block; margin: 0 auto; width: 0; border: 3px solid transparent; border-top-color: #000; border-bottom: 0; }

.workspace { flex: 1; min-height: 0; display: flex; border-bottom: 1px solid #a0a0a0; }
.rail { width: 28px; flex: none; display: flex; flex-direction: column; align-items: center; }
.rail > .grip:first-child { margin-top: 4px; }
.rail.left { border-right: 1px solid #a0a0a0; }
.rail.right { border-left: 1px solid #a0a0a0; }
.rail .more { width: 20px; height: 11px; }
.rail .more::after { margin: 2px 0 0 3px; border: 3px solid transparent; border-right-color: #000; border-left: 0; }
.r90 { transform: rotate(90deg); }
.r180 { transform: rotate(180deg); }
.r270 { transform: rotate(270deg); }

/* activities window */
.window { flex: 1; min-width: 0; display: flex; flex-direction: column; margin: 1px 0 0 1px; border: 2px solid #cfe7f8; }
.window-head { display: flex; align-items: center; justify-content: space-between; height: 23px; flex: none; margin-bottom: 3px; padding: 0 4px 0 3px; border: 1px solid #d8dad8; background: #f5f7f6; }
.window-head h1 { margin: 0; font: bold 13px/20px "Open Sans", "Noto Sans", sans-serif; }
.close { width: 12px; height: 12px; background: #c75050; color: #fff; font: bold 10px/10px "Liberation Sans", Arial, sans-serif; }
.tabs { display: flex; align-items: flex-end; height: 25px; flex: none; background: #efefef; border-bottom: 1px solid #e0e0e0; margin-bottom: 2px; }
.tab { font: bold 13px/18px "Open Sans", "Noto Sans", sans-serif; border: 1px solid #d8d8d8; border-bottom: 0; padding: 0 4px 2px; height: 21px; }
.tab.active { background: #fff; padding: 0 7px 4px; height: 24px; }
.desk { flex: 1; min-height: 0; display: grid; grid-template-rows: minmax(0, 395fr) minmax(0, 298fr); gap: 3px; padding: 5px; background: linear-gradient(#f0f0f0, #f0f0f0) content-box, #d6d8d7; }
.upper { display: flex; flex-direction: column; border: 1px solid #a0a0a0; min-width: 0; }
.lower { display: grid; grid-template-columns: 558px minmax(0, 1fr); border: 1px solid #a0a0a0; border-top-width: 2px; min-width: 0; }
.optbar { display: flex; height: 17px; flex: none; border-bottom: 1px solid #a0a0a0; background: #f0f0f0; line-height: 14px; }
.opt { display: flex; align-items: center; flex: 1; padding: 0 0 1px 3px; border-top: 1px solid #fff; white-space: nowrap; }
.opt.first { flex: 0 0 341px; border-right: 1px solid #a0a0a0; }
.tri { width: 10px; height: 6px; margin: 0 3px 0 8px; }
.split { flex: 1; min-height: 0; display: grid; grid-template-columns: 558px minmax(0, 1fr); }
.pane-left { display: flex; flex-direction: column; min-height: 0; min-width: 0; border-right: 2px solid #a0a0a0; padding-right: 4px; }
.pane-right { display: flex; flex-direction: column; min-height: 0; min-width: 0; }
.lower .pane-left > .optbar { border-right: 1px solid #a0a0a0; }
.scroller { flex: 1; min-height: 0; display: flex; }
.vbar { width: 17px; flex: none; display: flex; flex-direction: column; background: #f0f0f0; }
.vbar button { height: 17px; display: grid; place-items: center; }
.vbar .thumb { width: 15px; height: 17px; margin: 7px auto 0; background: #cdcdcd; }
.lower .vbar .thumb { margin-top: 0; }
.hbar { height: 17px; flex: none; display: flex; background: #f0f0f0; padding-right: 17px; }
.hbar button { width: 17px; display: grid; place-items: center; }
.hbar .thumb { width: 17px; height: 15px; margin: 1px 0; background: #cdcdcd; }
.hbar.mid .thumb { margin-left: 34%; }
.chev { width: 10px; height: 8px; }
.chev.h { width: 8px; height: 10px; }

/* tables */
.grid { flex: 1; min-width: 0; overflow: hidden; position: relative; background: #fff; }
table { width: 100%; table-layout: fixed; border-spacing: 0; }
.w13 { width: 13px; } .w14 { width: 14px; } .w18 { width: 18px; }
.w-id { width: 104px; } .w-name { width: 202px; } .w-start { width: 65px; } .w-finish { width: 62px; }
.w-rid { width: 112px; } .w-rname { width: 102px; } .w-role { width: 146px; } .w-units { width: 83px; }
th { position: relative; height: 35px; padding: 1px 3px 0; text-align: left; vertical-align: top; font-weight: normal; line-height: 14px; background: #f0f0f0; border-right: 1px solid #000; border-bottom: 1px solid #000; white-space: nowrap; overflow: hidden; }
th:last-child { border-right: 0; }
th.od { padding: 1px 0 0 7px; }
th.units { text-align: right; }
.sort { position: absolute; right: 3px; bottom: 12px; width: 8px; height: 8px; }
td { height: 18px; padding: 0 3px; line-height: 17px; overflow: hidden; white-space: nowrap; font-family: Roboto, "Liberation Sans", sans-serif; font-size: 12px; }
td span { display: block; overflow: hidden; white-space: pre; }
td.dt, td.id, .res td { font-size: 11px; }
.acts td { border-right: 1px solid #c0c0c0; border-bottom: 1px solid #c0c0c0; }
.acts td:last-child { border-right: 0; }
.acts .c0 { background: #00f; border: 0; border-right: 1px solid #6f6fff; padding: 0; }
.acts .c1 { background: #80ff80; border-bottom: 0; padding: 0; }
.acts .id { padding: 0 0 0 14px; }
.acts .dt { padding-right: 0; }
.id svg { float: left; width: 14px; height: 9px; margin: 5px 9px 0 0; }
.grp td { height: 22px; background: #80ff80; vertical-align: top; line-height: 17px; }
.grp .c0 { background: #00f; }
.acts .gname { padding: 0; }
.gname div { display: flex; align-items: center; height: 21px; }
.pm { width: 9px; height: 9px; margin: 0 5px 0 3px; background: #fff; color: #000; outline: 1px solid #a8a8a8; font: bold 11px/9px "Liberation Sans", Arial, sans-serif; text-align: center; }
.wbs { width: 15px; height: 15px; margin-right: 2px; }
.gname strong { font: bold 15px/19px "Liberation Sans", Arial, sans-serif; white-space: pre; padding: 0 0 1px 2px; height: 21px; border: 1px solid transparent; }
.gname .focus { position: relative; }
.gname .focus::before { content: ""; position: absolute; left: -1px; top: -1px; width: 83px; height: 21px; border: 1px solid #ff8020; }
.sel td, .grp.sel td { background: #0078d7; color: #fff; }
.num { text-align: right; }
.acts .num { padding-right: 2px; }
.marks { position: absolute; left: -7px; top: 25px; width: 320px; height: 110px; pointer-events: none; }
.res td:last-child { background: #fff; }
.res .ic { padding: 0 0 0 2px; }
.ic svg { width: 15px; height: 15px; }
.res .rid { padding-left: 4px; }
.res .sel .rid { outline: 1px solid #ff8020; outline-offset: -1px; }

/* time scale and charts */
.gantt { flex: 1; min-width: 0; overflow: hidden; display: flex; flex-direction: column; background: #fff; }
.scale { background: #f0f0f0; overflow: hidden; flex: none; text-align: center; border-bottom: 1px solid #000; }
.scale.bottom { border-top: 2px solid #80ff80; border-bottom: 0; }
.quarters, .months { display: grid; height: 17px; line-height: 15px; }
.months { grid-template-columns: 12px 67px 65px 67px 65px 67px 67px 61px 67px 65px 67px 65px 68px 67px 65px 67px; line-height: 17px; }
.quarters { grid-template-columns: 144px 199px 195px 197px 200px 199px; }
.quarters > div, .months > div { border-right: 1px solid #000; }
.quarters .cut { margin-left: -56px; }
.upper .quarters { border-bottom: 1px solid #000; }
.bottom .months { border-bottom: 1px solid #000; height: 18px; }
.bottom .quarters { line-height: 16px; }
.canvas { flex: 1; min-height: 0; width: 100%; height: 100%; overflow: hidden; }
.bar-label { font: 12px Roboto, "Liberation Sans", sans-serif; }
.axis { font: 11px "Liberation Sans", Arial, sans-serif; text-anchor: end; paint-order: stroke; stroke: #fff; stroke-width: 3px; }
.histogram { position: relative; flex: 1; min-height: 0; display: flex; flex-direction: column; border-top: 1px solid #808080; background: #fff; }
.plot { position: relative; flex: 1; min-height: 0; overflow: hidden; }
.legend { position: absolute; left: 57px; top: 24px; margin: 0; padding: 2px 4px 2px 5px; list-style: none; background: #fff; border: 1px solid #000; }
.legend li { display: flex; align-items: center; gap: 4px; height: 20px; white-space: nowrap; }
.sw { width: 10px; height: 10px; border: 1px solid #333; }
.sw.y { background: #ff0; border-color: #808000; } .sw.b { background: #00f; border-color: #000090; } .sw.g { background: #80ff80; border-color: #408040; } .sw.r { background: #f00; border-color: #800000; } .sw.k { background: #000; border-color: #000; }
.watermark { position: absolute; left: 108px; bottom: -12px; width: 194px; height: 90px; opacity: .4; overflow: visible; pointer-events: none; }
.watermark text { font: bold 30px "Open Sans", "Noto Sans", sans-serif; fill: #b4b4b4; }

/* filter box below the resource list */
.display { flex: none; height: 49px; margin: 5px 4px 5px 5px; padding: 0; border: 1px solid #a0a0a0; border-color: #a0a0a0 #fff #fff #a0a0a0; min-width: 0; color: #a0a0a0; text-shadow: 1px 1px #fff; }
.display-title { height: 22px; padding-left: 6px; line-height: 21px; border: solid #a0a0a0; border-width: 0 1px 1px 0; }
.checks { display: flex; gap: 26px; padding: 5px 0 0 7px; }
.checks label { display: flex; align-items: center; gap: 6px; }
.checks input { appearance: none; width: 12px; height: 12px; margin: 0; border: 2px solid #808080; border-color: #808080 #fff #fff #808080; background: #f0f0f0; }

/* status bar */
.statusbar { display: flex; align-items: center; gap: 3px; height: 18px; flex: none; padding-left: 96px; background: #f0f0f0; }
.cell { height: 16px; line-height: 15px; padding-left: 1px; border: 1px solid #a0a0a0; border-color: #a0a0a0 #fff #fff #a0a0a0; white-space: nowrap; }
.s0 { width: 75px; } .s1 { width: 110px; } .s2 { width: 125px; } .s3 { width: 145px; } .s4 { width: 130px; } .s5 { width: 75px; } .s6 { flex: 1; }
.sizer { width: 12px; height: 12px; align-self: flex-end; }
.taskbar { display: flex; height: 3px; flex: none; padding-left: 48px; background: #1c2018; }
.task { width: 344px; background: #f0f0f0; }
.task.dim { width: 48px; margin-left: 491px; background: #55555a; }
```
